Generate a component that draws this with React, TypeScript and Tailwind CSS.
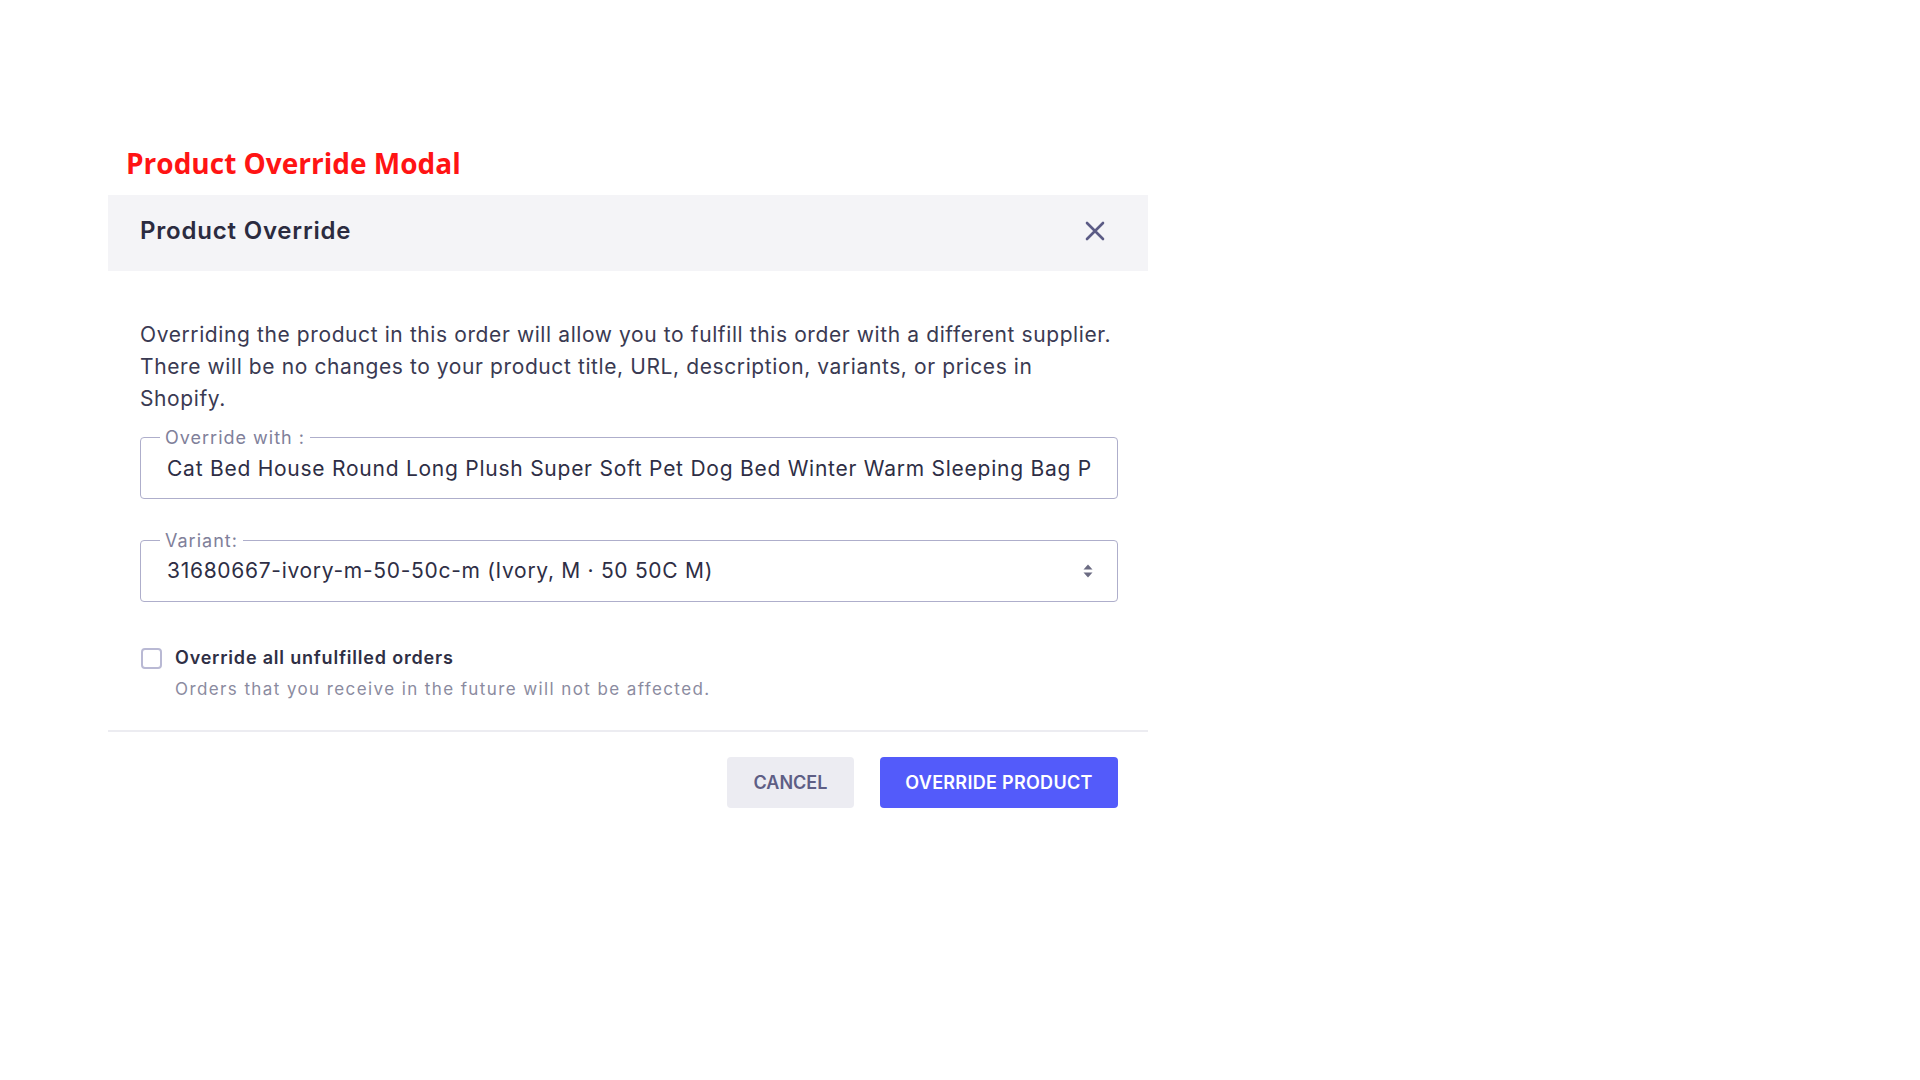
import React, { useState } from 'react';

const inter = "font-['Inter','Liberation_Sans',sans-serif]";

const App: React.FC = () => {
  const [overrideAll, setOverrideAll] = useState(false);

  return (
    <div className={`min-h-screen bg-white ${inter}`}>
      {/* Page label */}
      <div className="pt-[144px] pl-[126px]">
        <h1 className="font-['Open_Sans','Liberation_Sans',sans-serif] text-[28px] leading-[38px] font-bold text-[#ff1414]">
          Product Override Modal
        </h1>
      </div>

      {/* Modal */}
      <div className="ml-[108px] mt-[13px] w-[1040px] bg-white">
        {/* Header */}
        <div className="h-[76px] bg-[#f4f4f7] pl-[32px] pr-[43px] pb-[5px] flex items-center justify-between">
          <h2 className="text-[24px] leading-[32px] font-semibold tracking-[0.8px] text-[#2b2b40]">Product Override</h2>
          <button className="text-[#5b5b85]">
            <svg width="20" height="20" viewBox="0 0 20 20" fill="none">
              <path d="M2 2L18 18M18 2L2 18" stroke="currentColor" strokeWidth="2.6" strokeLinecap="round" />
            </svg>
          </button>
        </div>

        {/* Body */}
        <div className="pl-[32px] pr-[30px] pt-[48px]">
          <p className="text-[21px] leading-[32px] tracking-[0.6px] text-[#3a3a52] whitespace-nowrap">
            Overriding the product in this order will allow you to fulfill this order with a different supplier.
            <br />
            There will be no changes to your product title, URL, description, variants, or prices in
            <br />
            Shopify.
          </p>

          {/* Override with */}
          <div className="relative mt-[22px] h-[62px] rounded-[4px] border-[1.5px] border-[#aeaecb] flex items-center pl-[26px] pr-[24px]">
            <span className="absolute left-[19px] -top-[10px] px-[5px] bg-white text-[18px] leading-[20px] tracking-[1px] text-[#80809a]">
              Override with :
            </span>
            <input
              readOnly
              value="Cat Bed House Round Long Plush Super Soft Pet Dog Bed Winter Warm Sleeping Bag Puppy Cushion Mat"
              className="w-full bg-transparent outline-none text-[21px] leading-[28px] tracking-[0.75px] text-[#2e2e45] pt-[1px]"
            />
          </div>

          {/* Variant */}
          <div className="relative mt-[41px] h-[62px] rounded-[4px] border-[1.5px] border-[#aeaecb] flex items-center justify-between pl-[26px] pr-[23px]">
            <span className="absolute left-[19px] -top-[10px] px-[5px] bg-white text-[18px] leading-[20px] tracking-[1px] text-[#80809a]">
              Variant:
            </span>
            <span className="text-[21px] leading-[28px] tracking-[0.7px] text-[#2e2e45]">31680667-ivory-m-50-50c-m (Ivory, M · 50 50C M)</span>
            <svg width="12" height="18" viewBox="0 0 12 18" className="text-[#6b6b82]">
              <path d="M1.5 7.5L6 2.5L10.5 7.5Z" fill="currentColor" />
              <path d="M1.5 10.5L6 15.5L10.5 10.5Z" fill="currentColor" />
            </svg>
          </div>

          {/* Checkbox */}
          <div className="mt-[44px] flex items-start gap-[13px]">
            <button
              onClick={() => setOverrideAll(!overrideAll)}
              className="ml-[1px] mt-[2px] w-[21px] h-[21px] rounded-[4px] border-2 border-[#b9b9d4] bg-white shrink-0"
            />
            <div>
              <p className="text-[18px] leading-[24px] font-semibold tracking-[0.8px] text-[#2f2f45]">Override all unfulfilled orders</p>
              <p className="mt-[7px] text-[17px] leading-[24px] tracking-[1.4px] text-[#8b8ba0]">
                Orders that you receive in the future will not be affected.
              </p>
            </div>
          </div>
        </div>

        {/* Footer */}
        <div className="mt-[29px] border-t-2 border-[#ececf1] pt-[25px] pr-[30px] flex justify-end gap-[26px]">
          <button className="h-[51px] w-[127px] rounded-[4px] bg-[#ececf2] text-[18px] font-semibold text-[#5e5e85]">
            CANCEL
          </button>
          <button className="h-[51px] w-[238px] rounded-[4px] bg-[#535bfa] text-[18px] font-semibold tracking-[0.3px] text-white">
            OVERRIDE PRODUCT
          </button>
        </div>
      </div>
    </div>
  );
};

export default App;
